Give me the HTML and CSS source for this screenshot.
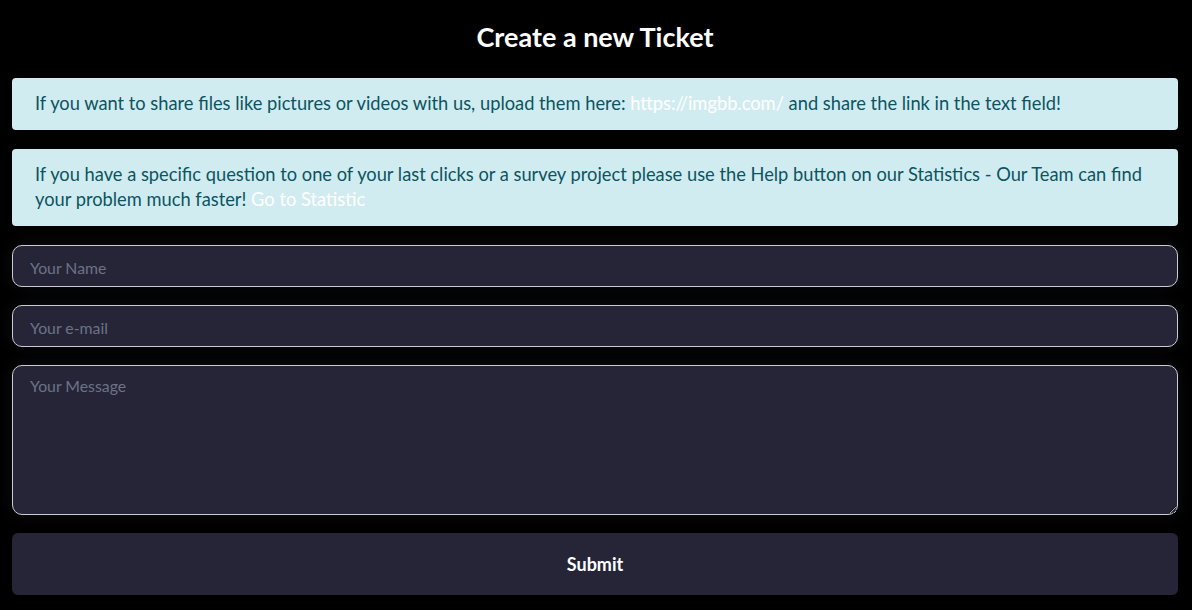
FILE: index.html
```html
<!DOCTYPE html>
<html lang="en">
<head>
    <meta charset="UTF-8">
    <meta name="viewport" content="width=device-width, initial-scale=1.0">
    <title>Create a new Ticket</title>
    <link rel="stylesheet" href="styles.css">
</head>
<body>

<div class="ticket-container">
    <h1>Create a new Ticket</h1>

    <div class="alert">
        If you want to share files like pictures or videos with us, upload them here: <a href="#">https://imgbb.com/</a> and share the link in the text field!
    </div>

    <div class="alert">
        If you have a specific question to one of your last clicks or a survey project please use the Help button on our Statistics - Our Team can find your problem much faster! <a href="#">Go to Statistic</a>
    </div>

    <form class="ticket-form">
        <input type="text" class="field" placeholder="Your Name">
        <input type="email" class="field" placeholder="Your e-mail">
        <textarea class="field message" placeholder="Your Message"></textarea>
        <button type="submit">Submit</button>
    </form>
</div>

</body>
</html>
```

FILE: styles.css
```css
body {
    font-family: Lato, 'Noto Sans', sans-serif;
    margin: 0;
    background-color: #000;
}

.ticket-container {
    padding: 0 14px 15px 12px;
}

h1 {
    color: #fff;
    text-align: center;
    font-size: 27px;
    font-weight: 700;
    margin: 0;
    padding: 20px 0 25px;
    line-height: 33px;
}

.alert {
    background-color: #d1ecf1;
    color: #0c5460;
    border-radius: 4px;
    padding: 13px 23px 14px;
    font-size: 18.3px;
    line-height: 25px;
    margin-bottom: 19px;
}

.alert a {
    color: #fff;
    text-decoration: none;
}

.ticket-form {
    display: flex;
    flex-direction: column;
    gap: 18px;
}

.field {
    font-family: inherit;
    font-size: 15.8px;
    color: #fff;
    background-color: #262538;
    border: 1px solid #c9cdd3;
    border-radius: 10px;
    padding: 2px 17px 0;
    height: 42px;
    box-sizing: border-box;
    box-shadow: 0 0 18px rgba(40, 44, 56, 0.35);
    outline: none;
}

.field::placeholder {
    color: #6b7385;
}

.message {
    height: 150px;
    padding-top: 10px;
    resize: vertical;
}

button {
    height: 62px;
    font-family: inherit;
    font-size: 18px;
    font-weight: 700;
    color: #fff;
    background-color: #262538;
    border: none;
    border-radius: 6px;
    cursor: pointer;
}
```
